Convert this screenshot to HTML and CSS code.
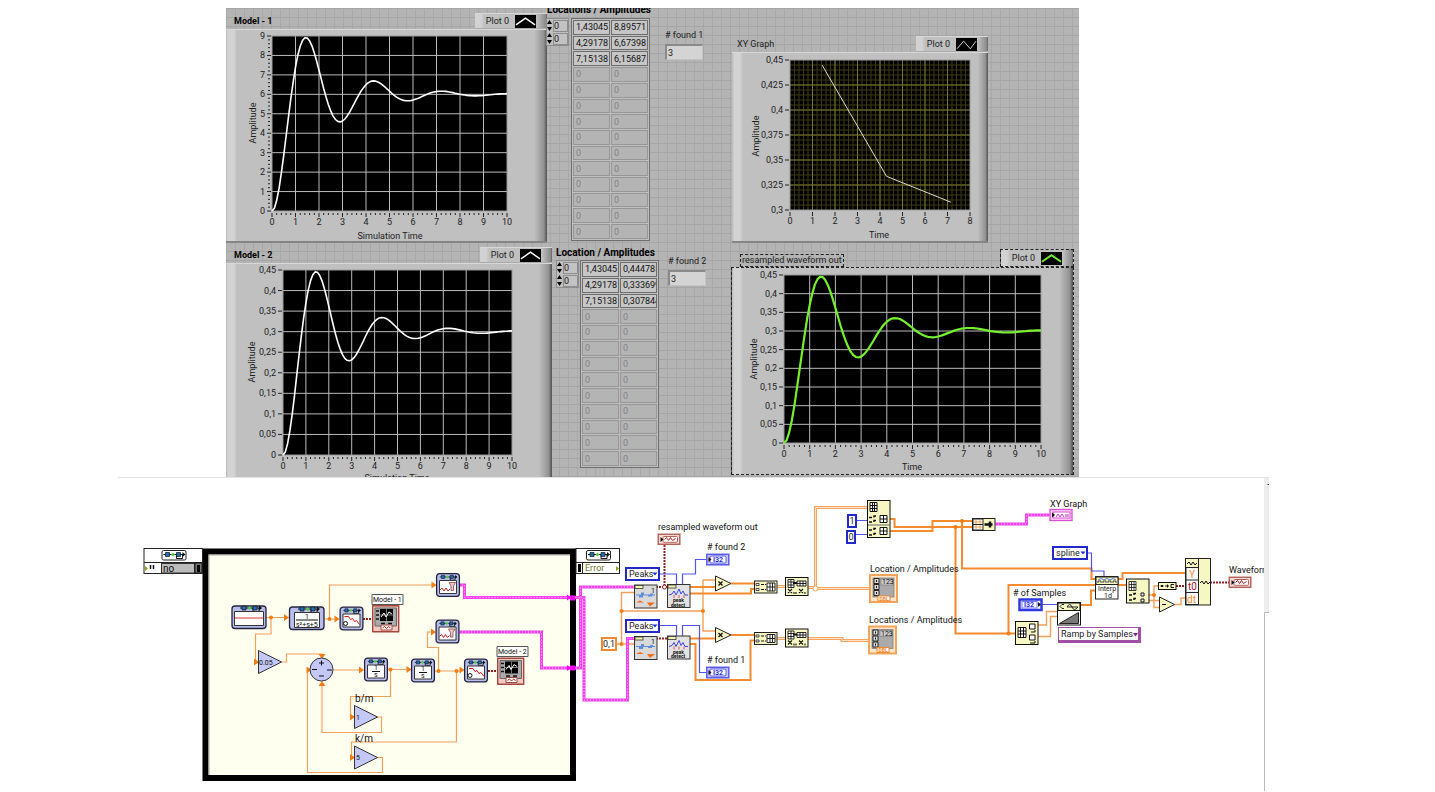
FILE: index.html
```
<!DOCTYPE html>
<html lang="en">
<head>
<meta charset="utf-8">
<title>Model simulation</title>
<link rel="stylesheet" href="styles.css">
</head>
<body>
<main class="page">
<section class="front-panel" aria-label="Front panel">
  <div class="row row-top">
    <figure class="graph graph-a">
      <figcaption class="graph-head"><span class="graph-title strong">Model - 1</span>
        <span class="legend">Plot 0 <svg class="swatch" viewBox="0 0 22 13"><path class="trace" d="M1 10 11 3l10 7"/></svg></span></figcaption>
      <div class="graph-body"><svg class="plot" data-chart="model1" viewBox="0 0 321 211"></svg></div>
    </figure>
    <div class="array array-a">
      <h2 class="array-title">Locations / Amplitudes</h2>
      <div class="array-parts">
        <div class="indexes">
          <label class="index"><svg viewBox="0 0 5 11"><path d="M0 4 2.500 0 5 4zM0 7h5L2.500 11z"/></svg><input aria-label="Row index 1" value="0"></label>
          <label class="index"><svg viewBox="0 0 5 11"><path d="M0 4 2.500 0 5 4zM0 7h5L2.500 11z"/></svg><input aria-label="Column index 1" value="0"></label>
        </div>
        <table class="cells cells-a">
          <tr class="set"><td>1,43045<td>8,89571</tr>
          <tr class="set"><td>4,29178<td>6,67398</tr>
          <tr class="set"><td>7,15138<td>6,15687</tr>
          <tr><td>0<td>0</tr><tr><td>0<td>0</tr><tr><td>0<td>0</tr><tr><td>0<td>0</tr>
          <tr><td>0<td>0</tr><tr><td>0<td>0</tr><tr><td>0<td>0</tr><tr><td>0<td>0</tr>
          <tr><td>0<td>0</tr><tr><td>0<td>0</tr><tr><td>0<td>0</tr>
        </table>
      </div>
    </div>
    <div class="found found-a"><label for="found1"># found 1</label><input id="found1" value="3" readonly></div>
    <figure class="graph graph-b">
      <figcaption class="graph-head"><span class="graph-title">XY Graph</span>
        <span class="legend">Plot 0 <svg class="swatch" viewBox="0 0 22 13"><path class="trace thin" d="M1 11 8 3l7 8 6-8"/></svg></span></figcaption>
      <div class="graph-body"><svg class="plot" data-chart="xy" viewBox="0 0 256 188"></svg></div>
    </figure>
  </div>
  <div class="row row-bottom">
    <figure class="graph graph-c">
      <figcaption class="graph-head"><span class="graph-title strong">Model - 2</span>
        <span class="legend">Plot 0 <svg class="swatch" viewBox="0 0 22 13"><path class="trace" d="M1 10 11 3l10 7"/></svg></span></figcaption>
      <div class="graph-body"><svg class="plot" data-chart="model2" viewBox="0 0 326 224"></svg></div>
    </figure>
    <div class="array array-b">
      <h2 class="array-title">Location / Amplitudes</h2>
      <div class="array-parts">
        <div class="indexes">
          <label class="index"><svg viewBox="0 0 5 11"><path d="M0 4 2.500 0 5 4zM0 7h5L2.500 11z"/></svg><input aria-label="Row index 2" value="0"></label>
          <label class="index"><svg viewBox="0 0 5 11"><path d="M0 4 2.500 0 5 4zM0 7h5L2.500 11z"/></svg><input aria-label="Column index 2" value="0"></label>
        </div>
        <table class="cells cells-b">
          <tr class="set"><td>1,43045<td>0,444785</tr>
          <tr class="set"><td>4,29178<td>0,333699</tr>
          <tr class="set"><td>7,15138<td>0,307844</tr>
          <tr><td>0<td>0</tr><tr><td>0<td>0</tr><tr><td>0<td>0</tr><tr><td>0<td>0</tr>
          <tr><td>0<td>0</tr><tr><td>0<td>0</tr><tr><td>0<td>0</tr><tr><td>0<td>0</tr>
          <tr><td>0<td>0</tr><tr><td>0<td>0</tr>
        </table>
      </div>
    </div>
    <div class="found found-b"><label for="found2"># found 2</label><input id="found2" value="3" readonly></div>
    <figure class="graph graph-d">
      <figcaption class="graph-head"><span class="graph-title selected">resampled waveform out</span>
        <span class="legend selected">Plot 0 <svg class="swatch" viewBox="0 0 22 13"><path class="trace green" d="M1 10 11 3l10 7"/></svg></span></figcaption>
      <div class="graph-body selected"><svg class="plot" data-chart="resampled" viewBox="0 0 341 206"></svg></div>
    </figure>
  </div>
</section>

<section class="diagram" aria-label="Block diagram">
<svg class="canvas" viewBox="118 477 1151 314">
<defs>
  <g id="chain"><path d="M1 3h21M14 3v4h6V3" fill="none" stroke="#111"/><path d="M3 1h4v4H3zM14 1h4v4h-4z" fill="#1d6fb8" stroke="#111" stroke-width=".7"/><path d="m8.500 3 2-2 2 2-2 2z" fill="#5c4"/><path d="m20 .5 3 2.500-3 2.500z"/></g>
  <g id="sim"><rect x=".6" y=".6" width="22.800" height="22.800" rx="3" fill="#b9bdeb" stroke="#23233f" stroke-width="1.300"/><use href="#chain" transform="translate(3 1.500) scale(.8)"/><rect x="3.500" y="7.500" width="17" height="13" fill="#fff" stroke="#333"/></g>
  <g id="simwave"><use href="#sim"/><path d="m5 10 4 0 2 3 2-1 2 3 2-1 3 4" fill="none" stroke="#d11"/><circle cx="6" cy="17" r="2" fill="none" stroke="#111"/></g>
  <g id="simout"><use href="#sim"/><path d="m4 17 2-2 2 3 2-3 2 3 2-2" fill="none" stroke="#b22"/><path d="M13 9.500h6.500l-2 3.500v4.500h-2.500v-4.500z" fill="#ecc" stroke="#844" stroke-width=".8"/></g>
  <g id="simint"><use href="#sim"/><path d="M8 14h8" stroke="#111"/><text x="10" y="12.500" class="tiny">1</text><text x="10" y="19.500" class="tiny">s</text></g>
  <g id="scope"><rect x=".7" y=".7" width="26" height="26" fill="#f3c9c2" stroke="#a5473f" stroke-width="1.400"/><rect x="3" y="3" width="21.500" height="18" fill="#aaa" stroke="#666"/><rect x="8" y="4" width="13" height="12" fill="#000"/><path d="M14.500 4v12M8 10h13" stroke="#777"/><path d="m9 12 3-4 2 4 3-5 3 2" fill="none" stroke="#fff"/><path d="M4 6h3M4 10h3M4 14h3M9 18.500h4m3 0h4" stroke="#111" stroke-width="1.500"/><rect x="9" y="20" width="11" height="5" fill="#fff" stroke="#a5473f"/><path d="m10.500 23 2-1.500 2 2 2-2 2 1.500" fill="none" stroke="#b22"/></g>
  <g id="terminal"><rect x=".8" y=".8" width="21.500" height="10" fill="#fbe0dc" stroke="#b4645a" stroke-width="1.500"/><rect x="5.500" y="3" width="14.500" height="5.800" rx="1" fill="#fff" stroke="#b4645a"/><path d="m3 3.500 3 2.500-3 2.500z"/><path d="m7 6 2-2 2 3 2-3 2 3 3-2" fill="none" stroke="#b22222"/></g>
  <g id="i32"><rect x=".8" y=".8" width="22" height="10.500" fill="#c9ccff" stroke="#5a5af0" stroke-width="1.500"/><rect x="4" y="2.500" width="16" height="7" rx="1" fill="#fff" stroke="#5a5af0"/><path d="m2.500 3.500 3 2.500-3 2.500z"/><text x="7" y="8.500" class="tiny blue">I32</text></g>
  <g id="express"><rect x=".5" y=".5" width="22.500" height="23" fill="#d9d9d9" stroke="#333"/><rect x="1" y="1" width="8" height="3" fill="#f5f5b0" stroke="#333" stroke-width=".8"/><text x="17" y="8" class="tiny">1</text><path d="M2 10h5v-2h3v2h6v-1h3v1h2v1h-3v1h-4v-1H9v2H5v-2H2z" fill="#5d8edb"/><path d="m2 18 4-2 4 2h3l3 4 5-4z" fill="#f36b1c"/></g>
  <g id="peak"><rect x=".5" y=".5" width="22.500" height="23" fill="#e2e2e2" stroke="#333"/><rect x="1" y="1" width="8" height="3" fill="#f5f5b0" stroke="#333" stroke-width=".8"/><path d="m2 11 3-1 2-3 2 4 3-6 2 5 2-3 2 4h3" fill="none" stroke="#3a45e0"/><path d="M7 11v3m5-3v3m5-3v3" stroke="#d55"/><text x="6" y="18" class="micro">peak</text><text x="4" y="22.500" class="micro">detect</text></g>
  <g id="build"><rect x=".5" y=".5" width="22.500" height="12" fill="#f7f7c4" stroke="#222"/><path d="M2 3h3v2H2zM2 8h3v2H2z" fill="#fff" stroke="#222" stroke-width=".8"/><path d="M7 4h3m1 0h1M7 9h3m1 0h1" stroke="#111"/><path d="M13 2.500h8v8h-8zM16 2.500v8M18.500 2.500v8M13 6.500h8" fill="#fff" stroke="#222"/></g>
  <g id="transpose"><rect x=".5" y=".5" width="22.500" height="18" fill="#f7f7c4" stroke="#111"/><path d="M3 2.500h6v8H3zM6 2.500v8M3 5h6M3 8h6M12 4h9v5h-9zM15 4v5M18 4v5M12 6.500h9" fill="#fff" stroke="#111" stroke-width=".9"/><path d="M8 6h4" stroke="#111" stroke-width="2"/><path d="m3 12 4 4m0-4-4 4m6-1v2m2-2v2m3-5 4 4m0-4-4 4m6-1v2" stroke="#111" stroke-width="1.100"/></g>
  <g id="arrayterm"><rect x="1" y="1" width="27" height="27" fill="#ffe6c8" stroke="#f2a45c" stroke-width="2"/><rect x="4" y="4" width="21" height="19" fill="#aaa" stroke="#777" stroke-width=".7"/><path d="M5 4.500h5v5H5zm0 6h5v5H5zm0 6h5v5H5z" fill="#ddd" stroke="#222"/><path d="M7.500 6v2m0 4v2m0 4v2" stroke="#111"/><rect x="12" y="5" width="12" height="6" fill="#ccc" stroke="#777" stroke-width=".6"/><text x="13" y="10" class="tiny">123</text><rect x="9" y="22" width="12" height="5" fill="#fff" stroke="#f08a30"/><text x="10.500" y="26.500" class="micro orange">DBL</text></g>
  <g id="index"><rect x=".5" y=".5" width="22.500" height="24" fill="#f7f7c4" stroke="#111"/><path d="M3 3h7v9H3zM5.500 3v9M8 3v9M3 6h7M3 9h7" fill="#fff" stroke="#111" stroke-width=".8"/><path d="M3 16.500h3m2 0V15h2M3 21.500h3m2 0V20h2" fill="none" stroke="#111" stroke-width="1.500"/><path d="M15 14.500h3v3h-3zm0 6h3v3h-3z" fill="#fff" stroke="#111"/></g>
  <path id="arrow" d="M-4-3.500 1 0-4 3.500z" fill="#f57c14"/>
</defs>

<path class="window-edge" d="M118 477.500h1151"/>
<rect x="205.500" y="551.500" width="367.500" height="226.500" fill="#fffff0" stroke="#000" stroke-width="6"/>
<path d="M209 775V555h361" fill="none" stroke="#aaa"/>

<g>
  <rect x="144" y="548.500" width="58.500" height="25" fill="#fff" stroke="#222"/><path d="M144 562.500h58" stroke="#222"/>
  <rect x="162" y="550.500" width="24" height="9.500" rx="1.500" fill="#fff" stroke="#222"/><use href="#chain" x="162.500" y="551.500"/>
  <path d="m145 566 3 2.500-3 2.500z" fill="#990"/><path d="M150.500 565v4m3-4v4" stroke="#111" stroke-width="1.500"/><rect x="161.500" y="563.500" width="33" height="9.500" fill="#bbb" stroke="#333"/><text x="163" y="572" class="large">no</text>
  <rect x="195" y="563" width="7" height="10" fill="#777" stroke="#111"/><path d="M198.500 565v7" stroke="#000" stroke-width="3"/>
  <rect x="576" y="548.500" width="43.500" height="25" fill="#fff" stroke="#222"/><path d="M576 562.500h43M582.500 563v10" stroke="#222"/>
  <rect x="586.500" y="550.500" width="24" height="9.500" rx="1.500" fill="#fff" stroke="#222"/><use href="#chain" x="587" y="551.500"/>
  <path d="M579.500 564v8" stroke="#000" stroke-width="3"/><text x="585" y="571" class="olive">Error</text><path d="m616 566 3 2.500-3 2.500z" fill="#990"/>
</g>

<g class="wire">
  <path d="M266 617.500h19M271 617.500V634h-15.500v28h2M325 619h11M329.500 619v-34H433M281 662h5.500v-8H322v2M333 670h28M387 669.500h21M390.500 669.500v27h-40V717h3M377 717h4.500v15.500H322V683M435 671h26M438.500 671v-23.500h-11V632h5M456.500 671v71h-105v15.500h2M377 757.500h5.500v15h-75V670h2"/>
</g>
<g class="wire bold-wire">
  <path d="M617 644h17M621.500 644v-51.500H634M621.500 611H703M703 580h13M703 580v51h13" class="light"/>
  <path d="M690 587h26M690 593.500h61V589h3M731 583.500h23M690 638.500h26M690 644h5.500v36h55v-39.500h4M731 635h23"/>
  <path d="M890 519h4.500v8H972M890 531h42.500v-10H972M962 521v47.500h129.500V579h4M955.500 527v106.500H1015M1008.500 633.500V585H1095M1080 605h11v-14.500h4M1118 579h4.500v-6H1185M1118 585h8"/>
  <path class="light" d="M1038 625h8.500v-13.500H1057M1038 636.500h12.500v-20h7M1149 595h5v-9h4M1154 595v12.500h5M1149 600.500h10M1174 604.500h7V598h4"/>
</g>
<g class="double-outer"><path d="M777 586.500h8M777 638.500h8M808 587.500h7v1h54M815.500 588V507.500H867M808 638.500h34v2h26"/></g>
<g class="double-inner"><path d="M777 586.500h8M777 638.500h8M808 587.500h7v1h54M815.500 588V507.500H867M808 638.500h34v2h26"/></g>
<circle cx="815.500" cy="588.500" r="2.500" fill="#fff" stroke="#f9a45e"/>
<g fill="#f57c14"><circle cx="271" cy="617.500" r="2"/><circle cx="329.500" cy="619" r="2"/><circle cx="390.500" cy="669.500" r="2"/><circle cx="438.500" cy="671" r="2"/><circle cx="456.500" cy="671" r="2"/><circle cx="621.500" cy="644" r="2"/><circle cx="621.500" cy="611" r="2"/><circle cx="703" cy="611" r="2"/><circle cx="962" cy="521" r="2"/><circle cx="955.500" cy="527" r="2"/><circle cx="1008.500" cy="633.500" r="2"/><circle cx="1154" cy="595" r="2"/></g>
<use href="#arrow" x="288" y="617.500"/><use href="#arrow" x="258" y="662"/><use href="#arrow" x="338.500" y="619"/><use href="#arrow" x="435.500" y="585"/><use href="#arrow" x="363" y="670"/><use href="#arrow" x="410.500" y="669.500"/><use href="#arrow" x="354" y="717"/><use href="#arrow" x="354" y="757.500"/><use href="#arrow" x="463.500" y="670"/><use href="#arrow" x="435" y="632"/><use href="#arrow" x="310.500" y="670"/>
<use href="#arrow" transform="translate(322 658) rotate(90)"/><use href="#arrow" transform="translate(322 682) rotate(-90)"/>

<g class="cluster"><path d="M459 585h5.500v12.500H575h9V700h43.500v-61.500h7M459 632h82.500v36h39V587H634M995 524h31.500v-9H1050"/></g>
<g class="cluster-dash"><path d="M459 585h5.500v12.500H575h9V700h43.500v-61.500h7M459 632h82.500v36h39V587H634M995 524h31.500v-9H1050"/></g>
<path d="M570 595.500h5v5h-5zM570 665.500h5v5h-5zM567 594.500l4 3-4 3zM567 665l4 3-4 3z" fill="#f0f"/>
<g class="dynamic"><path d="M363 619h9M488 671h9M664.500 545v42M656 587h11M656 638.500h11M1176 586h9M1210 582.500h19"/></g>
<circle cx="664.500" cy="587" r="2" fill="#fff" stroke="#902020"/>
<path class="integer" d="M660 574h16.500v10M682.500 584v-10h13v-14.500H706M660 625.500h16.500V636M682.500 636v-10.500h17v47h7M857 520.500h10M855 534.500h12M1088 553h3.500v18h12.500v5M1041 604.500h16"/>

<g stroke-linejoin="round">
  <rect x="232" y="606" width="34" height="22.500" rx="3" fill="#b9bdeb" stroke="#23233f" stroke-width="1.300"/><use href="#chain" x="239" y="605"/><rect x="234.500" y="611.500" width="29" height="14" fill="#fff" stroke="#333"/><path d="M235 618h28" stroke="#e03030"/>
  <rect x="289.500" y="607" width="34.500" height="22.500" rx="3" fill="#b9bdeb" stroke="#23233f" stroke-width="1.300"/><use href="#chain" x="297" y="606"/><rect x="294.500" y="612.500" width="25" height="15" fill="#fff" stroke="#333"/><path d="M296 620h22" stroke="#111"/><text x="305" y="619" class="tiny">1</text><text x="296" y="626.500" class="tiny">s²+s+5</text>
  <use href="#simwave" x="339.500" y="606.500"/><use href="#simout" x="436" y="573"/><use href="#simout" x="435.500" y="619.500"/><use href="#simint" x="364" y="657.500"/><use href="#simint" x="411" y="658.500"/><use href="#simwave" x="464" y="658.500"/>
  <rect x="372" y="594.500" width="31" height="10" fill="#fff" stroke="#555"/><text x="373" y="602" class="small">Model - 1</text><use href="#scope" x="372" y="605"/>
  <rect x="497" y="646.500" width="31" height="10" fill="#fff" stroke="#555"/><text x="498" y="654" class="small">Model - 2</text><use href="#scope" x="497" y="657.500"/>
  <g fill="#c3c8f7" stroke="#333"><circle cx="321.500" cy="669.500" r="11.500"/><path d="m258.500 650.500 23 11.500-23 11.500zM354.500 705.500l23 11.500-23 11.500zM354.500 746l23 11.500-23 11.500z"/></g>
  <path d="M319 663h5m-2.500-2.500v5M312 669.500h5" stroke="#111"/><path d="M319 676h5M327 670h5" stroke="#111"/>
  <text x="259" y="665" class="small">0.05</text><text x="356" y="720" class="small">1</text><text x="356" y="760" class="small">5</text><text x="355" y="702" class="large">b/m</text><text x="355" y="742" class="large">k/m</text>
</g>

<text x="658" y="530">resampled waveform out</text><use href="#terminal" x="657.500" y="533.500"/>
<text x="707" y="550"># found 2</text><use href="#i32" x="706" y="553.500"/>
<text x="707" y="663"># found 1</text><use href="#i32" x="706" y="666.500"/>
<use href="#express" x="634" y="584.500"/><use href="#express" x="634" y="636"/><use href="#peak" x="667" y="584"/><use href="#peak" x="667" y="635.500"/>
<path d="m715.500 576 15.500 7.500-15.500 7.500zM715.500 627.500l15.500 7.500-15.500 7.500z" fill="#f7f7c4" stroke="#222"/><path d="m718.500 581.500 4 4m0-4-4 4m0 47.500 4 4m0-4-4 4" stroke="#111" stroke-width="1.300"/>
<use href="#build" x="754" y="580.500"/><use href="#build" x="754" y="632"/><use href="#transpose" x="785" y="577"/><use href="#transpose" x="785" y="628.500"/>
<use href="#arrayterm" x="869" y="574"/><use href="#arrayterm" x="868" y="625.500"/>
<text x="870" y="572">Location / Amplitudes</text><text x="869" y="623">Locations / Amplitudes</text>
<rect x="867.500" y="500.500" width="22.500" height="37" fill="#f7f7c4" stroke="#111"/><path d="M870 502.500h7v9h-7zM872.500 502.500v9M874.500 502.500v9M870 505.500h7M870 508.500h7M880 515.500h7v7h-7zM883.500 515.500v7M880 519h7M880 527.500h7v7h-7zM883.500 527.500v7M880 531h7" fill="#fff" stroke="#111"/><path d="M869 517.500h3m2 0V516h2M869 522h3m2 0v-1.500h2M869 530h3m2 0v-1.500h2M869 535h3m2 0v-1.500h2" fill="none" stroke="#111" stroke-width="1.500"/><path d="M868 525h22" stroke="#666"/>
<rect x="972.500" y="518.500" width="22.500" height="12" fill="#f7f7c4" stroke="#222"/><path d="M973 519h10v11h-10zM973 524.500h10" fill="#fff" stroke="#222"/><path d="M975 521h2v2h-2zm4 0h2v2h-2zM975 526h2v2h-2zm4 0h2v2h-2z" fill="none" stroke="#f08a30" stroke-width=".8"/><path d="M984.500 524.500h8M990 521.500v6" stroke="#111" stroke-width="2.500"/>
<text x="1050" y="507">XY Graph</text><rect x="1050" y="509.500" width="22" height="11" fill="#ffd5fa" stroke="#d94fcf" stroke-width="1.300"/><rect x="1053" y="512" width="17" height="6" fill="#fff" stroke="#d94fcf"/><path d="m1052 512.500 3 2.500-3 2.500z"/><path d="m1056 517 2-3 2 3 2-3 2 3m2-3v3m2-3v3" fill="none" stroke="#c030b8"/>
<rect x="1095.500" y="576.500" width="22.500" height="22.500" fill="#fff" stroke="#222"/><path d="M1096 577h22v7.500h-22z" fill="#f7f7c4" stroke="#222"/><path d="M1098 583v-2h3v2m2 0v-2h3v2m2 0v-2h3v2m2 0v-2h3v2" fill="none" stroke="#444"/><path d="M1098 580q3-3 6 0q3-3 6 0q3-3 6 0" fill="none" stroke="#35d" stroke-width=".8"/><text x="1098" y="591" class="tiny">Interp</text><text x="1104" y="597.500" class="tiny">1d</text>
<text x="1013" y="596"># of Samples</text><rect x="1019.500" y="599.500" width="22" height="10.500" fill="#fff" stroke="#3037e0" stroke-width="2.500"/><rect x="1022" y="601.500" width="15" height="6.500" fill="#fff" stroke="#7077ff"/><text x="1024" y="607" class="tiny blue">I32</text><path d="m1038 602 3 2.500-3 2.500z"/>
<rect x="1057.500" y="602.500" width="23" height="22.500" fill="#fff" stroke="#111"/><path d="M1058 603h22v7.500h-22z" fill="#f7f7c4" stroke="#111"/><path d="M1064 604.500h-2l-2 2 2 2h2M1067 607q3-5 5 0t6 0z" fill="none" stroke="#222"/><path d="M1059.500 623.500h19v-11z" fill="#777" stroke="#222"/>
<rect x="1015.500" y="621.500" width="22.500" height="23" fill="#f7f7c4" stroke="#111"/><path d="M1018 627.500h8v10h-8zM1020.500 627.500v10M1023.500 627.500v10M1018 631h8M1018 634h8M1029.500 624h5.500v5h-5.500zM1029.500 635h5.500v5h-5.500z" fill="#fff" stroke="#111"/><path d="M1031 632h4v-2M1030 643h5v-2" fill="none" stroke="#111"/>
<use href="#index" x="1126" y="578.500"/>
<rect x="1158.500" y="582.500" width="17.500" height="7" fill="#f7f7c4" stroke="#111"/><path d="M1161 585.500h2v1h-2zM1165 586h4m-1.500-1.500v3M1171 584.500h3m-3 3h3m-3-3v3" fill="none" stroke="#111"/>
<path d="m1159.500 597 15 7.500-15 7.500z" fill="#f7f7c4" stroke="#222"/><path d="M1162 604.500h4" stroke="#111"/>
<rect x="1185.500" y="558.500" width="25" height="46.500" fill="#f7f7c4" stroke="#222"/><path d="M1186 567.500h12.500v37H1186zM1186 580h12.500M1186 592.500h12.500M1198.500 559v46" fill="#fff" stroke="#222"/><path d="m1187 564 2-2 2 3 2-3 2 3 2-2M1200 583l2-2 2 3 2-3 2 3 2-2" fill="none" stroke="#111"/><text x="1189" y="577.500" class="large orange">Y</text><text x="1188" y="590" class="large crimson">t0</text><text x="1187" y="602.500" class="large orange">dt</text>
<svg x="1220" y="560" width="44" height="32" viewBox="1220 560 44 32"><text x="1229" y="573">Waveform</text><use href="#terminal" x="1228.500" y="576.500"/></svg>

<foreignObject x="625" y="567" width="35" height="14"><select class="ring" aria-label="Peak type 2"><option>Peaks</option></select></foreignObject>
<foreignObject x="625" y="619" width="35" height="14"><select class="ring" aria-label="Peak type 1"><option>Peaks</option></select></foreignObject>
<foreignObject x="1052" y="546" width="36" height="14"><select class="ring" aria-label="Interpolation method"><option>spline</option></select></foreignObject>
<foreignObject x="1058" y="627" width="83" height="16"><select class="ring purple" aria-label="Ramp type"><option>Ramp by Samples</option></select></foreignObject>
<foreignObject x="601" y="637" width="16" height="14"><input class="constant double" aria-label="Threshold" value="0,1"></foreignObject>
<foreignObject x="847" y="514" width="10" height="14"><input class="constant" aria-label="Column 1" value="1"></foreignObject>
<foreignObject x="846" y="530" width="10" height="14"><input class="constant" aria-label="Column 0" value="0"></foreignObject>
<path d="M652.500 572.500h5l-2.500 3zM652.500 624.500h5l-2.500 3zM1080.500 551.500h5l-2.500 3z" fill="#2329e8"/><path d="M1133 633h5l-2.500 3.500z" fill="#8a2190"/>

<rect x="1264" y="478" width="5" height="134" fill="#ededed"/><path d="M1269 612.500h-4.500V791" fill="none" stroke="#bbb"/><path d="M1267.500 484.500h1.500" stroke="#333"/>
</svg>
</section>
</main>
<script src="charts.js"></script>
</body>
</html>
```

FILE: styles.css
```
* { box-sizing: border-box; }
body { margin: 0; background: #fff; color: #1c1c1c; font: 9px/12px Roboto, "Open Sans", sans-serif; }
input, select { font: inherit; color: inherit; border-radius: 0; }
figure, h2 { margin: 0; }

.page { padding-top: 8px; overflow: hidden; }

.front-panel {
  margin: 0 356px 0 226px;
  overflow: hidden;
  background-color: #b4b4b4;
  background-image:
    linear-gradient(#a6a6a6 1px, transparent 1px),
    linear-gradient(90deg, #a8a8a8 1px, transparent 1px);
  background-size: 9px 9px;
}
.row { display: grid; align-items: start; }
.row-top { grid-template-columns: 321fr 118px 67px 256fr 91fr; height: 239px; }
.row-bottom { grid-template-columns: 326fr 116px 63px 343fr 5fr; height: 230px; }

.graph-head { display: flex; justify-content: space-between; align-items: center; }
.graph-a { padding-top: 5px; }
.graph-b { padding-top: 28px; }
.graph-d { padding-top: 2px; }
.graph-title { padding-left: 8px; }
.graph-b .graph-title { padding-left: 5px; }
.strong { font-weight: 700; color: #000; }
.legend {
  display: flex; align-items: center; gap: 6px;
  height: 16px; padding: 0 11px;
  background: linear-gradient(90deg, #d2d2d2 0, #d2d2d2 6px, #c0c0c0 9px, #c0c0c0 86%, #8a8a8a 98%, #606060);
  border-top: 1px solid #d8d8d8; border-bottom: 1px solid #aaa;
}
.swatch { width: 21px; height: 13px; background: #000; }
.trace { fill: none; stroke: #fff; stroke-width: 1.5; }
.trace.thin { stroke-width: 1; stroke: #ddd; }
.trace.green { stroke: #74f02c; stroke-width: 2; }
.graph-body {
  border-top: 1px solid #d8d8d8; border-bottom: 2px solid #858585;
  background: linear-gradient(90deg, #b8b8b8 0, #d3d3d3 2px, #d3d3d3 8px, #c0c0c0 11px, #c0c0c0 96%, #929292 99%, #505050);
}
.plot { display: block; width: 100%; height: auto; }
.selected { border: 1px dashed #222; }
.graph-d .graph-title { margin-left: 9px; padding: 0 1px; align-self: flex-end; line-height: 11px; }
.graph-d .legend { height: 18px; }

.tick { stroke: #222; stroke-width: 1; }
.axis-text { font-size: 9px; fill: #1c1c1c; }
.middle { text-anchor: middle; }
.end { text-anchor: end; }

.array-title { font-size: 10px; line-height: 12px; white-space: nowrap; color: #000; }
.array-parts { display: flex; align-items: flex-start; }
.array-a .array-title { margin-top: -4px; }
.array-a .array-parts { margin-top: 2px; }
.array-b { padding-left: 4px; }
.array-b .array-parts { margin-top: 1px; }
.indexes { width: 23px; background: #c0c0c0; border: 1px solid #8d8d8d; }
.array-a .indexes { margin-left: -1px; }
.index { display: flex; align-items: center; gap: 1px; height: 13px; }
.index svg { width: 5px; height: 11px; flex: none; }
.index input { width: 15px; height: 12px; padding: 0; border: 1px solid #8d8d8d; background: #c2c2c2; }
.cells { margin-left: 2px; width: 79px; table-layout: fixed; border: 1px solid #6e6e6e; border-collapse: separate; border-spacing: 1px; background: #c0c0c0; color: #858585; }
.array-b .cells { margin-left: 1px; }
.cells-a { height: 223px; }
.cells-b { height: 208px; }
.cells td { padding: 0 0 0 2px; border: 1px solid #969696; background: #b4b4b4; line-height: 10px; overflow: hidden; white-space: nowrap; }
.cells .set { color: #111; }
.cells .set td { background: #c6c6c6; border-color: #6e6e6e; }

.found { display: flex; flex-direction: column; align-items: flex-start; }
.found-a { padding-top: 21px; }
.found-b { padding-top: 8px; }
.found input { width: 38px; height: 16px; margin-top: 3px; padding: 0 1px; border: 1px solid #c4c4c4; border-width: 2px 1px 1px 2px; border-top-color: #8a8a8a; border-left-color: #8a8a8a; background: #d4d4d4; }

.diagram { margin: 0 166px 0 118px; }
.canvas { display: block; width: 100%; height: auto; fill: #111; }
.window-edge { stroke: #e4e4e4; }
.wire { fill: none; stroke: #f5a05a; stroke-width: 1.2; }
.bold-wire { stroke: #f58a2e; stroke-width: 2; }
.bold-wire .light { stroke: #f5a05a; stroke-width: 1.4; }
.double-outer { fill: none; stroke: #f9a45e; stroke-width: 3; }
.double-inner { fill: none; stroke: #fde3cc; stroke-width: 1; }
.cluster { fill: none; stroke: #f43ef0; stroke-width: 3; }
.cluster-dash { fill: none; stroke: #ffc4fb; stroke-width: 1; stroke-dasharray: 1 2; }
.dynamic { fill: none; stroke: #8f2020; stroke-width: 2; stroke-dasharray: 2 1; }
.integer { fill: none; stroke: #5055e8; stroke-width: 1.2; }
.canvas text { font-size: 9px; }
.canvas .large { font-size: 10px; }
.canvas .small { font-size: 7px; }
.canvas .tiny { font-size: 7px; }
.canvas .micro { font-size: 5px; font-weight: 700; }
.canvas .blue { fill: #2a2fe0; font-weight: 700; }
.canvas .olive { fill: #74742a; }
.canvas .orange { fill: #f08a30; }
.canvas .crimson { fill: #b01030; }

.ring { appearance: none; display: block; width: 100%; height: 100%; padding: 0 0 0 2px; border: 2px solid #2329c8; background: #fff; line-height: 10px; }
.ring.purple { border-color: #a14fa6; border-width: 1px 3px 3px 1px; }
.constant { display: block; width: 100%; height: 100%; padding: 0; border: 2px solid #2329c8; background: #fff; text-align: center; }
.constant.double { border-color: #f08a30; }
```

FILE: charts.js
```
(function () {
  const NS = "http://www.w3.org/2000/svg";
  const model = [1, 2, 3, 4, 5, 6, 7, 8, 9, 10].map(String);
  const small = ["0", "0,05", "0,1", "0,15", "0,2", "0,25", "0,3", "0,35", "0,4", "0,45"];

  // Unit step response of 5 / (s^2 + s + 5)
  function response(t) {
    const w = Math.sqrt(4.75);
    return 1 - Math.exp(-t / 2) * (Math.cos(w * t) + Math.sin(w * t) / (2 * w));
  }
  function curve(gain) {
    const points = [];
    for (let t = 0; t <= 10.001; t += 0.1) points.push([t, gain * response(t)]);
    return points;
  }

  const charts = {
    model1: { box: [46, 6, 235, 175], x: ["0"].concat(model), y: ["0"].concat(model.slice(0, 9)), yMin: 0, yMax: 9,
      points: curve(6), line: "#fff", width: 1.6, grid: "#bbb", minorY: 5, label: "Simulation Time", labelX: 164, labelY: 209, sideX: 30, sideY: 93 },
    xy: { box: [58, 7, 180, 150], x: ["0"].concat(model.slice(0, 8)), y: ["0,3", "0,325", "0,35", "0,375", "0,4", "0,425", "0,45"], yMin: 0.3, yMax: 0.45,
      points: [[1.43, 0.4448], [4.29, 0.3337], [7.15, 0.3078]], line: "#ddddc8", width: 1, grid: "#77772a", fine: "#3a3a12", label: "Time", labelX: 147, labelY: 185, sideX: 27, sideY: 83 },
    model2: { box: [57, 6, 229, 185], x: ["0"].concat(model), y: small, yMin: 0, yMax: 0.45,
      points: curve(0.3), line: "#fff", width: 1.6, grid: "#bbb", label: "Simulation Time", labelX: 171, labelY: 217, sideX: 29, sideY: 98 },
    resampled: { box: [52, 7, 257, 168], x: ["0"].concat(model), y: small, yMin: 0, yMax: 0.45,
      points: curve(0.3), line: "#74f02c", width: 2.2, grid: "#bbb", label: "Time", labelX: 180, labelY: 202, sideX: 25, sideY: 91 }
  };

  function add(svg, name, attrs, text) {
    const el = document.createElementNS(NS, name);
    for (const key in attrs) el.setAttribute(key, attrs[key]);
    if (text) el.textContent = text;
    svg.appendChild(el);
  }

  document.querySelectorAll("[data-chart]").forEach(function (svg) {
    const c = charts[svg.dataset.chart];
    const [left, top, width, height] = c.box;
    const bottom = top + height;
    const cols = c.x.length - 1;
    const rows = c.y.length - 1;
    add(svg, "rect", { x: left, y: top, width: width, height: height, fill: "#000" });

    if (c.fine) {
      let d = "";
      for (let i = 1; i < cols * 5; i++) d += `M${left + (i * width) / (cols * 5)} ${top}v${height}`;
      for (let i = 1; i < rows * 5; i++) d += `M${left} ${top + (i * height) / (rows * 5)}h${width}`;
      add(svg, "path", { d: d, stroke: c.fine });
    }
    let grid = "";
    let ticks = "";
    for (let i = 0; i <= cols; i++) {
      const x = left + (i * width) / cols;
      if (i && i < cols) grid += `M${x} ${top}v${height}`;
      ticks += `M${x} ${bottom + 2}v4`;
      if (!c.fine && i < cols) for (let k = 1; k < 5; k++) ticks += `M${x + (k * width) / cols / 5} ${bottom + 2}v2`;
      add(svg, "text", { x: x, y: bottom + 14, class: "axis-text middle" }, c.x[i]);
    }
    for (let i = 0; i <= rows; i++) {
      const y = bottom - (i * height) / rows;
      if (i && i < rows) grid += `M${left} ${y}h${width}`;
      ticks += `M${left - 5} ${y}h4`;
      if (c.minorY && i < rows) for (let k = 1; k < c.minorY; k++) ticks += `M${left - 4} ${y - (k * height) / rows / c.minorY}h2`;
      add(svg, "text", { x: left - 7, y: y + 3, class: "axis-text end" }, c.y[i]);
    }
    add(svg, "path", { d: grid, stroke: c.grid });
    add(svg, "path", { d: ticks, class: "tick" });
    add(svg, "rect", { x: left, y: top, width: width, height: height, fill: "none", stroke: "#999", "stroke-width": 1 });

    const d = c.points.map(function (p, i) {
      const x = left + (p[0] / cols) * width;
      const y = bottom - ((p[1] - c.yMin) / (c.yMax - c.yMin)) * height;
      return (i ? "L" : "M") + x.toFixed(1) + " " + y.toFixed(1);
    }).join("");
    add(svg, "path", { d: d, fill: "none", stroke: c.line, "stroke-width": c.width, "stroke-linejoin": "round" });
    add(svg, "text", { x: c.labelX, y: c.labelY, class: "axis-text middle" }, c.label);
    add(svg, "text", { x: c.sideX, y: c.sideY, class: "axis-text middle", transform: `rotate(-90 ${c.sideX} ${c.sideY})` }, "Amplitude");
  });
})();
```
